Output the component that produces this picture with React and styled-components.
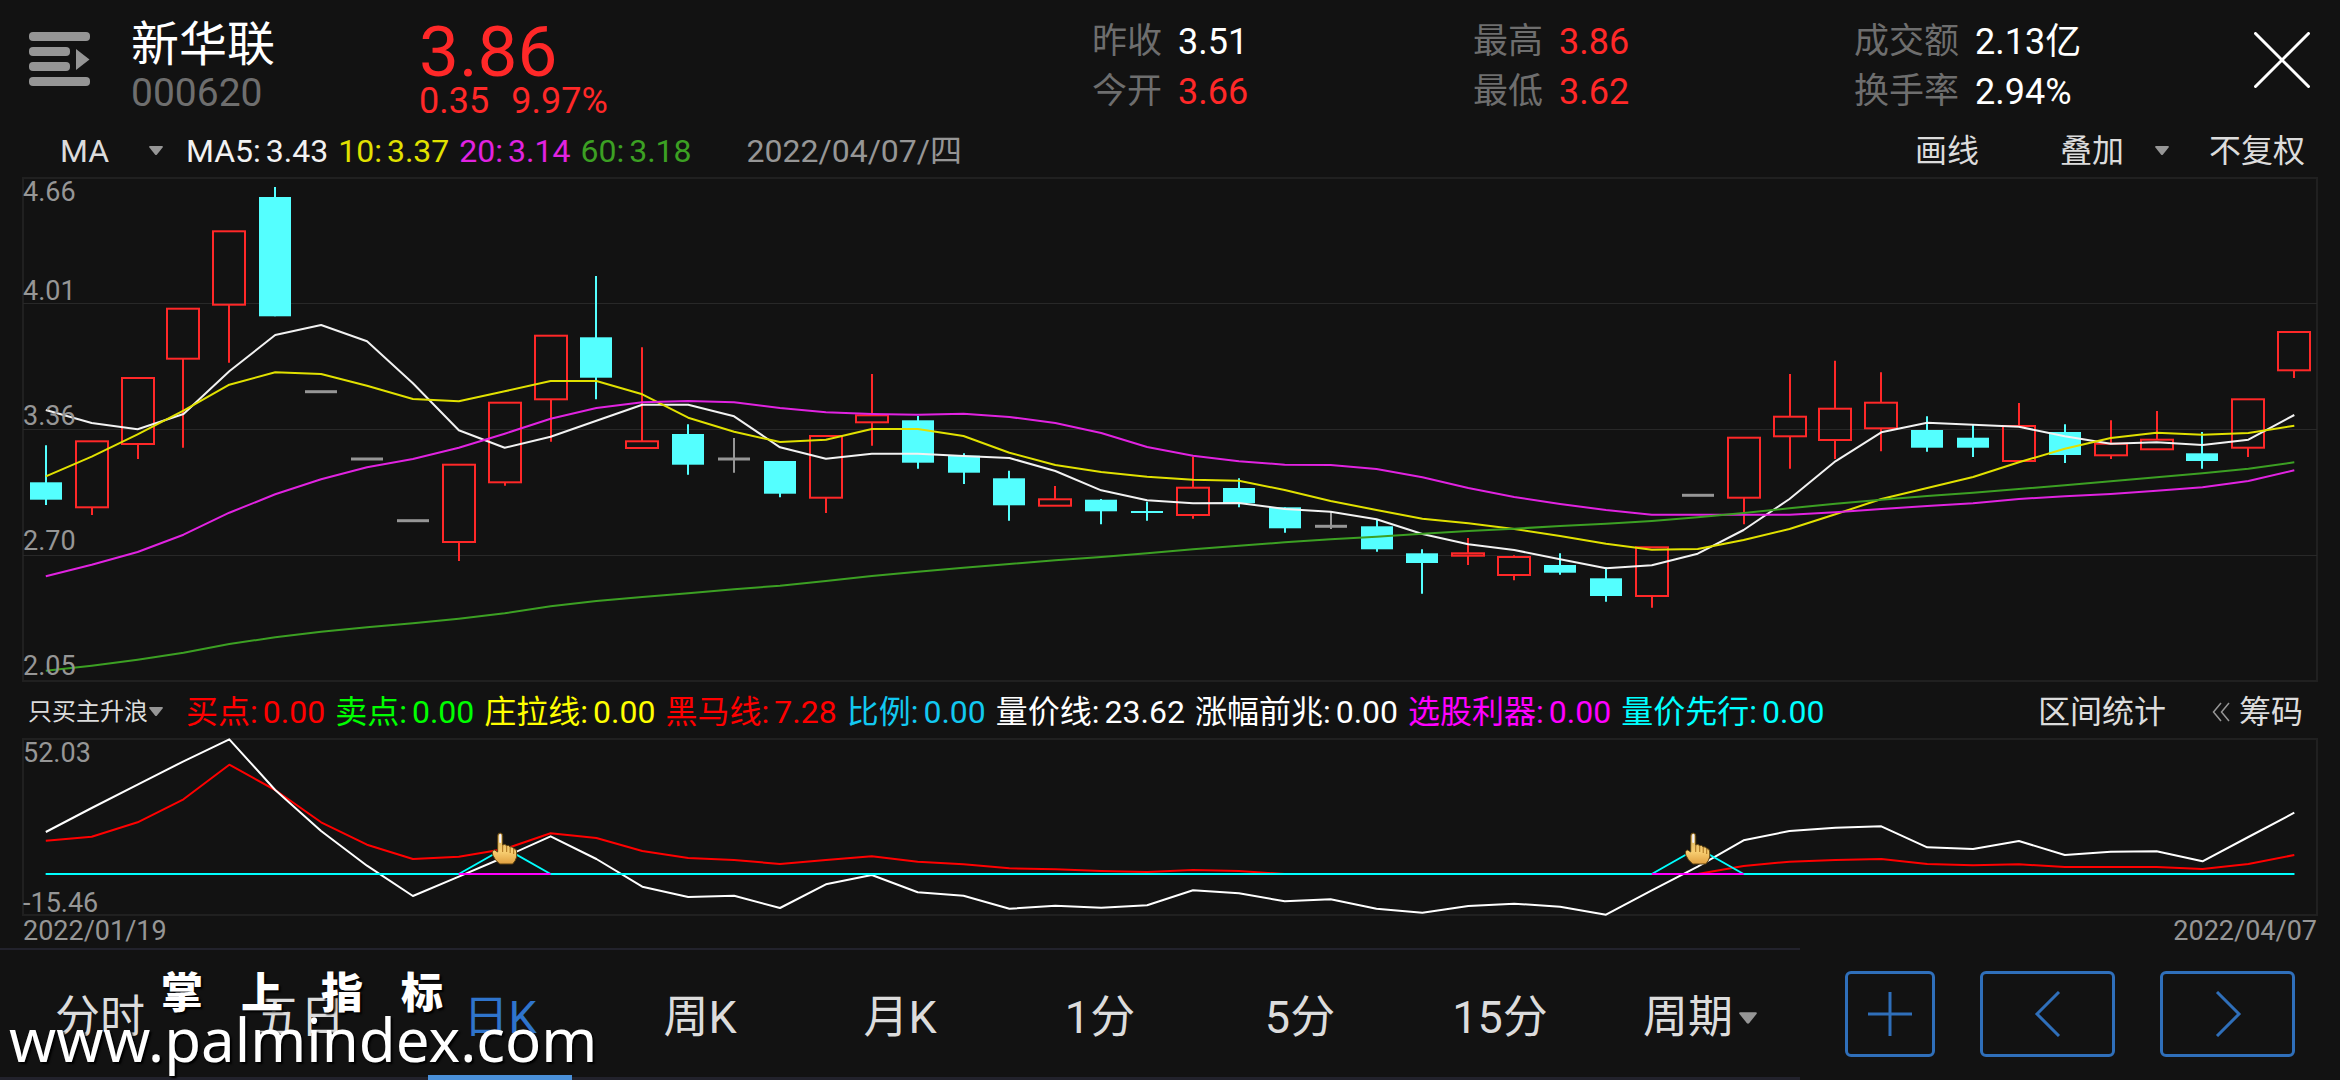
import React, { useState } from "react";
import styled, { createGlobalStyle } from "styled-components";

const GlobalStyle = createGlobalStyle`
  *, *::before, *::after { box-sizing: border-box; }
  body {
    margin: 0;
    background: #121212;
    color: #dcdcdc;
    font-family: Roboto, "Noto Sans CJK SC", sans-serif;
    overflow-x: hidden;
  }
  button, select {
    font: inherit;
    color: inherit;
    background: none;
    border: 0;
    margin: 0;
    padding: 0;
    cursor: pointer;
  }
`;

const RED = "#ff2828";
const CYAN = "#54ffff";

/* ---------- market data ---------- */

const STEP = 45.887;
const FIRST_X = 45.8;
const xAt = (i) => FIRST_X + i * STEP;

// [kind, bodyTop, bodyBottom, high, low]
const CANDLES = [
  ["down", 482.3, 499.7, 445.3, 505], ["up", 441.3, 507.3, 441.3, 515],
  ["up", 378, 444, 378, 459], ["up", 308.7, 358.7, 308.7, 447.7],
  ["up", 231.3, 304.7, 231.3, 362.7], ["down", 197, 316.3, 187, 316.3],
  ["flat", 391.7, 391.7, 391.7, 391.7], ["flat", 459, 459, 459, 459],
  ["flat", 520.7, 520.7, 520.7, 520.7], ["up", 464.7, 542, 464.7, 561],
  ["up", 402.7, 482.3, 402.7, 485.7], ["up", 335.7, 399.3, 335.7, 441.7],
  ["down", 337.3, 377.7, 276, 399.3], ["up", 441.3, 448, 347.3, 448],
  ["down", 434, 464.7, 424.3, 474.7], ["flat", 459, 459, 438, 472.7],
  ["down", 461, 493.7, 461, 497.3], ["up", 436, 497.7, 436, 513],
  ["up", 415.3, 422.3, 374, 445.7], ["down", 420.3, 462.7, 416, 468.7],
  ["down", 455.7, 472.7, 453.3, 484], ["down", 478.3, 505.3, 470.7, 520.7],
  ["up", 499.3, 505.7, 486, 505.7], ["down", 499.7, 511.3, 499, 524.3],
  ["down", 511, 513, 501.7, 520.7], ["up", 487.7, 515, 456.7, 518.7],
  ["down", 488, 503.3, 478.3, 507.3], ["down", 507.3, 528.3, 507.3, 532.7],
  ["flat", 526.3, 526.3, 511.7, 529], ["down", 526.3, 549.3, 520, 551.7],
  ["down", 553.3, 563, 549.3, 593.7], ["up", 553.3, 555.7, 538, 565],
  ["up", 557, 575, 555.3, 580.3], ["down", 565, 572.7, 553.3, 574.7],
  ["down", 578.3, 596, 567.3, 601.7], ["up", 547.3, 596, 547.3, 607.7],
  ["flat", 495.3, 495.3, 495.3, 495.3], ["up", 437.7, 497.7, 437.7, 524.3],
  ["up", 416.7, 436.3, 374, 468.7], ["up", 408.7, 440, 360.7, 459],
  ["up", 402.7, 428.3, 372.3, 451.3], ["down", 430, 447.7, 416.3, 451.7],
  ["down", 437.7, 447.7, 424.3, 457], ["up", 426, 461, 403, 461],
  ["down", 432, 455, 424.3, 463], ["up", 443.7, 455.3, 420.3, 459],
  ["up", 439.7, 449.3, 411, 449.3], ["down", 453.3, 461, 432, 468.7],
  ["up", 399.3, 447.7, 399.3, 457], ["up", 332, 370.3, 332, 378],
];

const MA5 = [410, 423, 429.3, 414, 371.3, 335, 325, 341.3, 383.3, 430.3, 447.7, 436.7, 420.7, 404.7, 404.7, 416.3, 447.3, 458.7, 453.7, 453.7, 456, 458, 471, 490.3, 500.3, 503.3, 503, 509, 511.7, 519.3, 534, 544.3, 550, 559.3, 568.3, 565.3, 553.7, 530, 499, 461.3, 432.3, 422.7, 424.7, 426.7, 436.3, 443.7, 442.3, 445, 439.7, 415];
const MA10 = [476.3, 456.7, 434.3, 410.7, 384.7, 372.3, 374, 385.7, 399, 401.3, 391.3, 381, 381, 394.3, 417.7, 431.7, 442, 439.7, 429, 429, 436, 452.7, 465, 472, 476.7, 479.7, 480.7, 490, 501, 510, 518.7, 523.3, 529, 536, 543.7, 549.7, 549, 540, 529, 514.3, 499, 488, 477, 462.3, 448.7, 438, 432.7, 434.7, 433, 425.7];
const MA20 = [576.3, 564.7, 552, 534.7, 512.7, 494.3, 479.3, 467.3, 459, 447.7, 433.7, 418.7, 408, 402.3, 401, 402.3, 408, 412.3, 414, 414.7, 413.7, 417, 423, 433, 447, 455.7, 461.3, 464.7, 465, 469, 477.3, 488, 497, 504, 510, 514.7, 514.7, 514.7, 514.7, 512.3, 509, 506, 503.3, 499, 496.3, 494, 490.7, 487.3, 481, 470.3];
const MA60 = [670.7, 665.7, 659.7, 652.7, 644, 637.3, 631.7, 627.3, 623.3, 618.7, 613.3, 606.3, 601, 597, 593.3, 589.3, 585.7, 581, 576, 571.7, 567.7, 564, 560.3, 557, 553.3, 549.3, 545.7, 542.3, 539.3, 536.7, 533.7, 531, 528.7, 526, 523.7, 521, 517.3, 513, 508.3, 503.7, 499.7, 496, 492.7, 489, 485.3, 481.3, 477.3, 473.3, 468.7, 462.3];

const VOLUME_PRICE = [832, 808, 784.7, 761.3, 739.3, 790, 831, 865.7, 896, 876.7, 857, 836.3, 859, 886.7, 897, 895.7, 908, 884.3, 875, 892.3, 895.7, 908.7, 905.7, 907.7, 905.3, 890.3, 893.3, 901.3, 899.3, 908.7, 912.7, 906, 903.7, 906.7, 914.7, 890.3, 866.7, 840.3, 831, 827.7, 826.3, 847.3, 849, 841, 855, 851.7, 851.3, 861.3, 837, 812.7];
const DARK_HORSE = [840.7, 836.7, 822.3, 799.3, 764.7, 790, 822.3, 844.7, 859, 856.7, 849, 833.3, 838, 851, 858, 860, 864, 860, 856.3, 861.7, 864.3, 868.3, 869.3, 871, 872, 870, 871, 874, 874, 874, 874, 874, 874, 874, 874, 874, 874, 866, 861.7, 860, 859, 864, 865.3, 864.3, 867, 867, 867, 869, 864, 855];
const SIGNALS = [10, 36];
const BASELINE = 874;
const LEADING = CANDLES.map((_, i) => (SIGNALS.includes(i) ? 848 : BASELINE));

const MA_VALUES = [
  { name: "MA5", value: "3.43", color: "#f2f2f2" },
  { name: "10", value: "3.37", color: "#e1e100" },
  { name: "20", value: "3.14", color: "#e123e1" },
  { name: "60", value: "3.18", color: "#3ca023" },
];

const INDICATORS = [
  { name: "买点", value: "0.00", color: "#ff0000" },
  { name: "卖点", value: "0.00", color: "#00ff00" },
  { name: "庄拉线", value: "0.00", color: "#ffff00" },
  { name: "黑马线", value: "7.28", color: "#ff0000" },
  { name: "比例", value: "0.00", color: "#12c8f0" },
  { name: "量价线", value: "23.62", color: "#ffffff" },
  { name: "涨幅前兆", value: "0.00", color: "#ffffff" },
  { name: "选股利器", value: "0.00", color: "#ff00ff" },
  { name: "量价先行", value: "0.00", color: "#00ffff" },
];

const QUOTES = [
  [["昨收", "3.51"], ["今开", "3.66", RED]],
  [["最高", "3.86", RED], ["最低", "3.62", RED]],
  [["成交额", "2.13亿"], ["换手率", "2.94%"]],
];

const PERIODS = ["分时", "五日", "日K", "周K", "月K", "1分", "5分", "15分"];

/* ---------- styled parts ---------- */

const Page = styled.main`
  position: relative;
  display: flex;
  flex-direction: column;
  min-height: 100vh;
`;

const Header = styled.header`
  display: flex;
  height: 126px;
  padding: 17px 30px 0 29px;
`;

const IconButton = styled.button`
  display: block;
  align-self: flex-start;
  flex: none;
  margin-top: 15px;
  line-height: 0;
`;

const Stock = styled.div`
  width: 288px;
  margin-left: 41px;
`;

const StockName = styled.h1`
  margin: 0;
  font-size: 48px;
  line-height: 56px;
  font-weight: 400;
  color: #fff;
`;

const StockCode = styled.div`
  font-size: 39px;
  line-height: 40px;
  color: #6e6e6e;
`;

const Price = styled.div`
  flex: 1;
  color: ${RED};
`;

const LastPrice = styled.div`
  font-size: 71px;
  line-height: 70px;
`;

const Change = styled.div`
  display: flex;
  gap: 22px;
  font-size: 36px;
  line-height: 28px;
`;

const Quotes = styled.div`
  display: flex;
`;

const QuoteList = styled.dl`
  width: 381px;
  margin: 0;
`;

const QuoteRow = styled.div`
  display: flex;
  gap: 16px;
  height: 50px;
  line-height: 50px;
`;

const QuoteLabel = styled.dt`
  font-size: 35px;
  color: #6e6e6e;
`;

const QuoteValue = styled.dd`
  margin: 0;
  font-size: 36px;
  color: ${(p) => p.$color || "#fff"};
`;

const CloseButton = styled(IconButton)`
  margin-left: 19px;
`;

const Toolbar = styled.div`
  display: flex;
  align-items: center;
  height: ${(p) => p.$height}px;
  padding: ${(p) => p.$top || 0}px ${(p) => p.$right}px ${(p) => p.$bottom || 0}px 22px;
  font-size: 32px;
  line-height: 40px;
  white-space: nowrap;
`;

const Picker = styled.label`
  display: flex;
  align-items: center;
  justify-content: space-between;
  flex: none;
  width: 164px;
  padding: 0 23px 0 ${(p) => p.$indent}px;
  font-size: ${(p) => p.$size}px;
`;

const PickerSelect = styled.select`
  appearance: none;
  outline: none;
  line-height: 40px;

  option { color: #121212; }
`;

const Legend = styled.div`
  display: flex;
  gap: 10px;
`;

const LegendItem = styled.span`
  display: flex;
  gap: 5px;
  color: ${(p) => p.$color};
`;

const TradeDate = styled.time`
  margin-left: 55px;
  color: #969696;
`;

const Actions = styled.div`
  display: flex;
  align-items: center;
  margin-left: auto;
`;

const Action = styled.button`
  display: flex;
  align-items: center;
  gap: ${(p) => p.$gap || 0}px;
  margin-left: ${(p) => p.$space}px;
`;

const Plot = styled.svg`
  display: block;
  width: calc(100% - 44px);
  height: auto;
  margin: 0 22px;
  overflow: visible;
`;

const AxisText = styled.text`
  font-size: 27px;
  fill: #969696;
`;

const DateAxis = styled.div`
  display: flex;
  justify-content: space-between;
  height: 32px;
  padding: 0 23px;
  font-size: 27px;
  line-height: 30px;
  color: #969696;
`;

const Footer = styled.footer`
  display: flex;
  height: 132px;
`;

const Tabs = styled.nav`
  display: flex;
  flex: 1;
  border-top: 2px solid #22222c;
  border-bottom: 3px solid #22222c;
`;

const Tab = styled.button`
  position: relative;
  display: flex;
  align-items: center;
  justify-content: center;
  gap: 6px;
  flex: 1;
  padding-top: 9px;
  font-size: 45px;
  line-height: 60px;
  color: ${(p) => (p.$active ? "#2f74cc" : "#dcdcdc")};

  &::after {
    content: "";
    display: ${(p) => (p.$active ? "block" : "none")};
    position: absolute;
    left: 28px;
    right: 28px;
    bottom: -3px;
    height: 5px;
    background: #4a90d9;
  }
`;

const Controls = styled.div`
  display: flex;
  gap: 45px;
  padding: 23px 45px;
`;

const ControlButton = styled.button`
  display: flex;
  align-items: center;
  justify-content: center;
  width: ${(p) => p.$width}px;
  height: 86px;
  border: 3px solid #2f6fba;
  border-radius: 6px;
`;

const Watermark = styled.div`
  position: absolute;
  left: 9px;
  bottom: 14px;
  color: #fff;
  text-shadow: 2px 2px 2px #000;
  pointer-events: none;
`;

const WatermarkName = styled.div`
  display: flex;
  gap: 38px;
  padding-left: 152px;
  font-family: "Noto Sans CJK SC", sans-serif;
  font-size: 42px;
  font-weight: 900;
  line-height: 44px;
`;

const WatermarkSite = styled.div`
  font-family: "Noto Sans", sans-serif;
  font-size: 60px;
  line-height: 54px;
`;

/* ---------- drawings ---------- */

const Caret = ({ width = 14, height = 9 }) => (
  <svg width={width} height={height} viewBox="0 0 14 9" aria-hidden="true">
    <path d="M1 0H13Q14.400 .2 13.600 1.400L8 8.400Q7 9.400 6 8.400L.4 1.400Q-.4 .2 1 0Z" fill="#969696" />
  </svg>
);

const ListIcon = () => (
  <svg width="61" height="54" viewBox="0 0 61 54" aria-hidden="true" fill="#959595">
    <rect x="0" y="0" width="61" height="9" rx="4" />
    <rect x="0" y="15" width="41" height="9" rx="4" />
    <rect x="0" y="30" width="41" height="9" rx="4" />
    <rect x="0" y="45" width="61" height="9" rx="4" />
    <path d="M47 17L60.500 27.500L47 38Z" />
  </svg>
);

const CloseIcon = () => (
  <svg width="56" height="56" viewBox="0 0 56 56" aria-hidden="true">
    <path d="M1.500 1.500L54.500 54.500M54.500 1.500L1.500 54.500" stroke="#fff" strokeWidth="3" strokeLinecap="round" />
  </svg>
);

const DoubleLeft = () => (
  <svg width="18" height="20" viewBox="0 0 18 20" fill="none" stroke="#969696" strokeWidth="1.500" aria-hidden="true">
    <path d="M9 1L1.500 10L9 19M17 1L9.500 10L17 19" />
  </svg>
);

const ControlIcon = ({ d }) => (
  <svg width="46" height="46" viewBox="0 0 46 46" fill="none" stroke="#2f6fba" strokeWidth="3" aria-hidden="true">
    <path d={d} />
  </svg>
);

const Line = ({ values, color, width = 2 }) => (
  <polyline
    points={values.map((y, i) => `${xAt(i).toFixed(1)},${y}`).join(" ")}
    fill="none"
    stroke={color}
    strokeWidth={width}
    strokeLinejoin="round"
  />
);

const Candle = ({ index, candle }) => {
  const [kind, top, bottom, high, low] = candle;
  const x = Math.round(xAt(index));
  if (kind === "flat") {
    return (
      <g stroke="#969696">
        <path d={`M${x - 16} ${top}H${x + 16}`} strokeWidth="3" />
        {high < low && <path d={`M${x} ${high}V${low}`} strokeWidth="2" />}
      </g>
    );
  }
  if (kind === "down") {
    return (
      <g>
        <path d={`M${x} ${high}V${low}`} stroke={CYAN} strokeWidth="2" />
        <rect x={x - 16} y={top} width="32" height={bottom - top} fill={CYAN} />
      </g>
    );
  }
  return (
    <g fill="none" stroke={RED} strokeWidth="2">
      <path d={`M${x} ${high}V${top}M${x} ${bottom}V${low}`} />
      <rect x={x - 16} y={top} width="32" height={bottom - top} />
    </g>
  );
};

const Hand = ({ x }) => (
  <g transform={`translate(${x - 13} 833)`}>
    <path
      d="M6 3Q6 0 8.500 0Q11 0 11 3V12Q13 10.500 15 12.500Q17 11.500 18.500 14Q21 13 22 15.500Q25 15.500 25 19V24Q24 28 21 31H8Q3 27 1 22Q0 17 3 17L6 19Z"
      fill="url(#handFill)"
      stroke="#5a4010"
      strokeWidth="1"
    />
    <path d="M11 12V19M15 13V19M18.500 14V20M22 16V21" stroke="#a86f1c" strokeWidth="1" />
    <path d="M8.500 2V9" stroke="#f4f4ff" strokeWidth="2" strokeLinecap="round" />
  </g>
);

const PriceChart = () => (
  <Plot viewBox="22 177 2296 505" role="img" aria-label="日K线">
    <g fill="none" stroke="#202020">
      <rect x="23" y="178" width="2294" height="503" strokeWidth="2" />
      <path d="M23 303.500H2317M23 429.500H2317M23 555.500H2317" strokeWidth="1" stroke="#282828" />
    </g>
    {CANDLES.map((candle, i) => <Candle key={i} index={i} candle={candle} />)}
    <Line values={MA5} color="#f2f2f2" />
    <Line values={MA10} color="#e1e100" />
    <Line values={MA20} color="#e123e1" />
    <Line values={MA60} color="#3ca023" />
    <AxisText x="23" y="201">4.66</AxisText>
    <AxisText x="23" y="300">4.01</AxisText>
    <AxisText x="23" y="425">3.36</AxisText>
    <AxisText x="23" y="550">2.70</AxisText>
    <AxisText x="23" y="675">2.05</AxisText>
  </Plot>
);

const IndicatorChart = () => (
  <Plot viewBox="22 738 2296 178" role="img" aria-label="只买主升浪">
    <defs>
      <linearGradient id="handFill" x1="0" y1="0" x2="0" y2="1">
        <stop offset="0" stopColor="#d8b060" />
        <stop offset="0.6" stopColor="#f8cf72" />
        <stop offset="1" stopColor="#e0a040" />
      </linearGradient>
    </defs>
    <rect x="23" y="739" width="2294" height="176" fill="none" stroke="#202020" strokeWidth="2" />
    <Line values={DARK_HORSE} color="#ff0000" />
    <Line values={VOLUME_PRICE} color="#ffffff" />
    <Line values={LEADING} color="#00ffff" />
    {[[0, 9], [11, 35], [37, 49]].map(([from, to]) => (
      <path key={from} d={`M${xAt(from)} ${BASELINE}H${xAt(to)}`} stroke="#00ffff" strokeWidth="2" />
    ))}
    {SIGNALS.map((i) => (
      <path key={i} d={`M${xAt(i - 1)} ${BASELINE}H${xAt(i + 1)}`} stroke="#ff00ff" strokeWidth="2" />
    ))}
    {SIGNALS.map((i) => <Hand key={i} x={xAt(i)} />)}
    <AxisText x="23" y="762">52.03</AxisText>
    <AxisText x="23" y="912">-15.46</AxisText>
  </Plot>
);

const LegendList = ({ items }) => (
  <Legend>
    {items.map((item) => (
      <LegendItem key={item.name} $color={item.color}>
        <span>{item.name}:</span>
        <span>{item.value}</span>
      </LegendItem>
    ))}
  </Legend>
);

/* ---------- page ---------- */

export default function App() {
  const [period, setPeriod] = useState("日K");

  return (
    <>
      <GlobalStyle />
      <Page>
        <Header>
          <IconButton type="button" aria-label="列表"><ListIcon /></IconButton>
          <Stock>
            <StockName>新华联</StockName>
            <StockCode>000620</StockCode>
          </Stock>
          <Price>
            <LastPrice>3.86</LastPrice>
            <Change><span>0.35</span><span>9.97%</span></Change>
          </Price>
          <Quotes>
            {QUOTES.map((rows) => (
              <QuoteList key={rows[0][0]}>
                {rows.map(([label, value, color]) => (
                  <QuoteRow key={label}>
                    <QuoteLabel>{label}</QuoteLabel>
                    <QuoteValue $color={color}>{value}</QuoteValue>
                  </QuoteRow>
                ))}
              </QuoteList>
            ))}
          </Quotes>
          <CloseButton type="button" aria-label="关闭"><CloseIcon /></CloseButton>
        </Header>

        <Toolbar $height={51} $right={35} $bottom={2}>
          <Picker $indent={38} $size={32}>
            <PickerSelect aria-label="主图指标"><option>MA</option></PickerSelect>
            <Caret />
          </Picker>
          <LegendList items={MA_VALUES} />
          <TradeDate dateTime="2022-04-07">2022/04/07/四</TradeDate>
          <Actions>
            <Action type="button">画线</Action>
            <Action type="button" $space={81} $gap={31} aria-haspopup="menu">叠加<Caret /></Action>
            <Action type="button" $space={40}>不复权</Action>
          </Actions>
        </Toolbar>
        <PriceChart />

        <Toolbar $height={56} $right={37} $top={3}>
          <Picker $indent={6} $size={24}>
            <PickerSelect aria-label="副图指标"><option>只买主升浪</option></PickerSelect>
            <Caret />
          </Picker>
          <LegendList items={INDICATORS} />
          <Actions>
            <Action type="button">区间统计</Action>
            <Action type="button" $space={46} $gap={9}><DoubleLeft />筹码</Action>
          </Actions>
        </Toolbar>
        <IndicatorChart />
        <DateAxis><span>2022/01/19</span><span>2022/04/07</span></DateAxis>

        <Footer>
          <Tabs>
            {PERIODS.map((name) => (
              <Tab key={name} type="button" $active={name === period} onClick={() => setPeriod(name)}>
                {name}
              </Tab>
            ))}
            <Tab type="button" aria-haspopup="menu">周期<Caret width={18} height={12} /></Tab>
          </Tabs>
          <Controls>
            <ControlButton type="button" $width={90} aria-label="放大"><ControlIcon d="M23 1V45M1 23H45" /></ControlButton>
            <ControlButton type="button" $width={135} aria-label="上一个"><ControlIcon d="M34 1L12 23L34 45" /></ControlButton>
            <ControlButton type="button" $width={135} aria-label="下一个"><ControlIcon d="M12 1L34 23L12 45" /></ControlButton>
          </Controls>
        </Footer>

        <Watermark>
          <WatermarkName><span>掌</span><span>上</span><span>指</span><span>标</span></WatermarkName>
          <WatermarkSite>www.palmindex.com</WatermarkSite>
        </Watermark>
      </Page>
    </>
  );
}
